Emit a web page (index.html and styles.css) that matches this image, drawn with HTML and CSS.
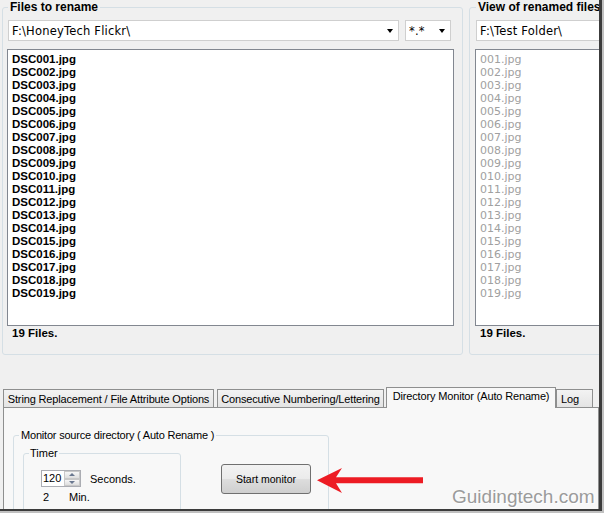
FILE: index.html
```html
<!DOCTYPE html>
<html lang="en">
<head>
  <meta charset="UTF-8">
  <title>Rename files - Directory Monitor</title>
  <link rel="stylesheet" href="styles.css">
</head>
<body>
  <div class="shot">
    <div class="top">
      <fieldset class="group files">
        <legend>Files to rename</legend>
        <div class="combo-row">
          <div class="combo combo-path"><span>F:\HoneyTech Flickr\</span><i class="caret"></i></div>
          <div class="combo combo-mask"><span>*.*</span><i class="caret"></i></div>
        </div>
        <ul class="list">
          <li>DSC001.jpg</li>
          <li>DSC002.jpg</li>
          <li>DSC003.jpg</li>
          <li>DSC004.jpg</li>
          <li>DSC005.jpg</li>
          <li>DSC006.jpg</li>
          <li>DSC007.jpg</li>
          <li>DSC008.jpg</li>
          <li>DSC009.jpg</li>
          <li>DSC010.jpg</li>
          <li>DSC011.jpg</li>
          <li>DSC012.jpg</li>
          <li>DSC013.jpg</li>
          <li>DSC014.jpg</li>
          <li>DSC015.jpg</li>
          <li>DSC016.jpg</li>
          <li>DSC017.jpg</li>
          <li>DSC018.jpg</li>
          <li>DSC019.jpg</li>
        </ul>
        <div class="count">19 Files.</div>
      </fieldset>

      <fieldset class="group renamed">
        <legend>View of renamed files</legend>
        <div class="combo-row">
          <div class="combo combo-dest"><span>F:\Test Folder\</span></div>
        </div>
        <ul class="list dim">
          <li>001.jpg</li>
          <li>002.jpg</li>
          <li>003.jpg</li>
          <li>004.jpg</li>
          <li>005.jpg</li>
          <li>006.jpg</li>
          <li>007.jpg</li>
          <li>008.jpg</li>
          <li>009.jpg</li>
          <li>010.jpg</li>
          <li>011.jpg</li>
          <li>012.jpg</li>
          <li>013.jpg</li>
          <li>014.jpg</li>
          <li>015.jpg</li>
          <li>016.jpg</li>
          <li>017.jpg</li>
          <li>018.jpg</li>
          <li>019.jpg</li>
        </ul>
        <div class="count">19 Files.</div>
      </fieldset>
    </div>

    <div class="tabs">
      <div class="tab-strip">
        <div class="tab tab-opts">String Replacement / File Attribute Options</div>
        <div class="tab tab-num">Consecutive Numbering/Lettering</div>
        <div class="tab tab-dir active">Directory Monitor (Auto Rename)</div>
        <div class="tab tab-log">Log</div>
      </div>
      <div class="tab-pane">
        <fieldset class="group monitor">
          <legend>Monitor source directory ( Auto Rename )</legend>
          <div class="monitor-body">
            <fieldset class="group timer">
              <legend>Timer</legend>
              <div class="timer-row">
                <div class="spin">
                  <span class="spin-val">120</span>
                  <span class="spin-btns">
                    <span class="spin-btn"><i class="tri-up"></i></span>
                    <span class="spin-btn"><i class="tri-down"></i></span>
                  </span>
                </div>
                <span>Seconds.</span>
              </div>
              <div class="timer-row minutes">
                <span class="min-val">2</span>
                <span>Min.</span>
              </div>
            </fieldset>
            <button class="start">Start monitor</button>
          </div>
        </fieldset>
      </div>
    </div>

    <!-- callout added on the screenshot -->
    <svg class="arrow" width="110" height="30" viewBox="0 0 110 30">
      <polygon points="1,14.3 26,2 20,11.3 107,11.3 107,17.3 20,17.3 26,27" fill="#ed1c24"/>
    </svg>
    <div class="watermark">Guidingtech.com</div>
  </div>
</body>
</html>
```

FILE: styles.css
```css
body {
  margin: 0;
  width: 604px;
  height: 513px;
  overflow: hidden;
  background: #c0c0c0;
  font-family: 'Liberation Sans', Arial, sans-serif;
  font-size: 11px;
  color: #000;
}

.shot {
  position: relative;
  width: 599px;
  height: 509px;
  background: #f0f0f0;
  border-right: 3px solid #3c3c3c;
  border-bottom: 2px solid #3c3c3c;
  overflow: hidden;
}

/* group boxes */

.group {
  margin: 0;
  border: 1px solid #d5dfe5;
  border-radius: 3px;
  min-width: 0;
  box-sizing: border-box;
}

.group > legend {
  padding: 0 2px;
  line-height: 14px;
}

.top {
  display: flex;
  gap: 6px;
  padding-left: 2px;
}

.files {
  flex-shrink: 0;
  width: 461px;
  height: 355px;
  padding: 0 8px 0 4px;
}

.renamed {
  flex-shrink: 0;
  width: 200px;
  height: 355px;
  padding: 0 0 0 5px;
}

.files > legend,
.renamed > legend {
  margin-left: 1px;
  font-size: 12px;
  font-weight: bold;
}

/* combos */

.combo-row {
  display: flex;
  gap: 6px;
  margin: 6px 0 0 1px;
}

.combo {
  display: flex;
  align-items: center;
  height: 21px;
  box-sizing: border-box;
  padding: 0 5px 0 3px;
  border: 1px solid #cfcfcf;
  background: #fff;
  font-family: 'DejaVu Sans', sans-serif;
  font-size: 11.5px;
  letter-spacing: 0.2px;
}

.combo span {
  flex: 1;
  white-space: nowrap;
  overflow: hidden;
}

.combo-path { width: 391px; }
.combo-mask { width: 46px; }
.combo-dest { width: 190px; }

.caret {
  width: 0;
  height: 0;
  border-top: 4px solid #000;
  border-left: 3.5px solid transparent;
  border-right: 3.5px solid transparent;
}

/* file lists */

.list {
  list-style: none;
  margin: 8px 0 0;
  padding: 3px 4px;
  height: 277px;
  box-sizing: border-box;
  border: 1px solid #828790;
  background: #fff;
  font-size: 11.5px;
  font-weight: bold;
  line-height: 13px;
  white-space: nowrap;
}

.files .list { width: 447px; }
.renamed .list { width: 195px; }

.list.dim {
  font-family: 'DejaVu Sans', sans-serif;
  font-size: 11px;
  font-weight: normal;
  color: #a0a0a0;
}

.count {
  margin-top: 1px;
  padding-left: 5px;
  font-size: 11.5px;
  font-weight: bold;
  line-height: 13px;
}

/* tabs */

.tabs {
  margin-top: 32px;
}

.tab-strip {
  display: flex;
  align-items: flex-end;
  height: 20px;
  padding-left: 3px;
}

.tab {
  height: 18px;
  box-sizing: border-box;
  padding-top: 1px;
  border: 1px solid #8e8f8f;
  border-bottom: 0;
  background: linear-gradient(#f3f3f3, #e4e4e4);
  line-height: 16px;
  text-align: center;
  white-space: nowrap;
  letter-spacing: -0.15px;
}

.tab.active {
  position: relative;
  z-index: 1;
  height: 21px;
  margin-bottom: -1px;
  padding-top: 0;
  background: #f8f8f8;
}

.tab-opts { width: 211px; }
.tab-num { width: 167px; margin-left: 3px; }
.tab-dir { width: 170px; margin-left: 2px; }
.tab-log { width: 37px; text-align: left; padding-left: 4px; }

.tab-pane {
  height: 120px;
  margin-left: 3px;
  border: 1px solid #8e8f8f;
  border-bottom: 0;
  background: #f8f8f8;
}

/* monitor page */

.monitor {
  width: 316px;
  height: 100px;
  margin: 20px 0 0 9px;
  padding: 0 6px 0 5px;
}

.monitor > legend {
  letter-spacing: -0.2px;
}

.monitor-body {
  display: flex;
  align-items: flex-start;
}

.timer {
  width: 158px;
  height: 80px;
  margin: 4px 0 0 4px;
  padding: 0 0 0 5px;
}

.timer > legend {
  padding: 0 1px;
}

.timer-row {
  display: flex;
  align-items: center;
  margin: 10px 0 0 12px;
}

.timer-row.minutes {
  margin-top: 4px;
  line-height: 13px;
}

.spin {
  display: flex;
  width: 40px;
  height: 17px;
  box-sizing: border-box;
  margin-right: 9px;
  border: 1px solid #abadb3;
  background: #fff;
}

.spin-val {
  padding-left: 1px;
  line-height: 15px;
}

.spin-btns {
  display: flex;
  flex-direction: column;
  width: 16px;
  margin-left: auto;
}

.spin-btn {
  display: flex;
  flex: 1;
  align-items: center;
  justify-content: center;
  border: 1px solid #c9c9c9;
  background: linear-gradient(#f7f7f7, #dedede);
}

.tri-up,
.tri-down {
  width: 0;
  height: 0;
  border-left: 3px solid transparent;
  border-right: 3px solid transparent;
}

.tri-up { border-bottom: 3px solid #6a7890; }
.tri-down { border-top: 3px solid #6a7890; }

.min-val {
  width: 28px;
  box-sizing: border-box;
  padding-left: 2px;
}

.start {
  width: 90px;
  height: 30px;
  margin: 22px 0 0 40px;
  padding: 0;
  border: 1px solid #707070;
  border-radius: 3px;
  background: linear-gradient(#f2f2f2 0%, #ebebeb 48%, #dddddd 52%, #cfcfcf 100%);
  font-family: 'Liberation Sans', Arial, sans-serif;
  font-size: 10.5px;
  color: #000;
}

/* screenshot annotations */

.arrow {
  position: absolute;
  left: 316px;
  top: 466px;
}

.watermark {
  position: absolute;
  left: 452px;
  top: 487px;
  font-size: 19px;
  line-height: 19px;
  color: #9b9b9b;
  text-shadow: 1px 1px 0 #fff;
}
```
